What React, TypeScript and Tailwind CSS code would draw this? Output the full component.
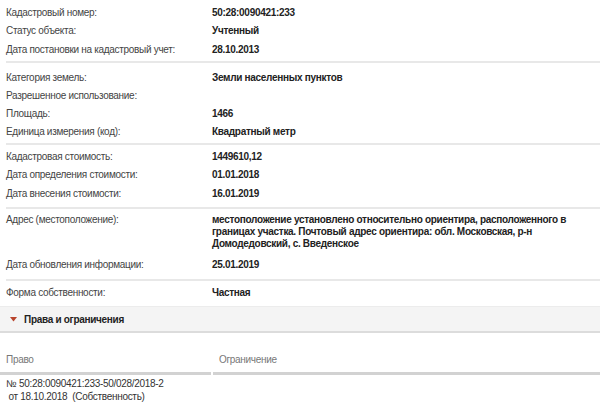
const rows1 = [
  ['Кадастровый номер:', '50:28:0090421:233'],
  ['Статус объекта:', 'Учтенный'],
  ['Дата постановки на кадастровый учет:', '28.10.2013'],
];

const rows2 = [
  ['Категория земель:', 'Земли населенных пунктов'],
  ['Разрешенное использование:', ''],
  ['Площадь:', '1466'],
  ['Единица измерения (код):', 'Квадратный метр'],
];

const rows3 = [
  ['Кадастровая стоимость:', '1449610,12'],
  ['Дата определения стоимости:', '01.01.2018'],
  ['Дата внесения стоимости:', '16.01.2019'],
];

const Row = ({ label, value, h }: { label: string; value: string; h: string }) => (
  <div className={`flex items-center ${h}`}>
    <div className="w-[206px] shrink-0 text-[#444]">{label}</div>
    <div className="font-bold text-[#222]">{value}</div>
  </div>
);

const Sep = () => <div className="h-[2px] bg-[#e8e8e8]" />;

export default function App() {
  return (
    <div
      className="w-[600px] h-[404px] overflow-hidden bg-white pl-[6px] text-[10px] tracking-[-0.3px]"
      style={{ fontFamily: '"Liberation Sans", Arial, sans-serif' }}
    >
      <div className="pt-[3px] pb-[2.5px]">
        {rows1.map(([l, v]) => (
          <Row key={l} label={l} value={v} h="h-[18.5px]" />
        ))}
      </div>
      <Sep />
      <div className="pt-[5px] pb-[3px]">
        {rows2.map(([l, v]) => (
          <Row key={l} label={l} value={v} h="h-[18px]" />
        ))}
      </div>
      <Sep />
      <div className="pt-[2px] pb-[4.5px]">
        {rows3.map(([l, v]) => (
          <Row key={l} label={l} value={v} h="h-[18.5px]" />
        ))}
      </div>
      <Sep />
      <div className="pt-[5px] pb-[6px]">
        <div className="flex leading-[12px]">
          <div className="w-[206px] shrink-0 text-[#444]">Адрес (местоположение):</div>
          <div className="w-[368px] font-bold text-[#222]">
            местоположение установлено относительно ориентира, расположенного в границах участка. Почтовый адрес ориентира: обл. Московская, р-н Домодедовский, с. Введенское
          </div>
        </div>
        <div className="mt-[5px]">
          <Row label="Дата обновления информации:" value="25.01.2019" h="h-[18px]" />
        </div>
      </div>
      <Sep />
      <div className="pt-[2px] pb-[5px]">
        <Row label="Форма собственности:" value="Частная" h="h-[18px]" />
      </div>
      <div className="-ml-[6px] flex h-[27px] items-center border-t border-b-2 border-t-[#ececec] border-b-[#dcdcdc] bg-[#f4f4f4] pl-[10px]">
        <svg width="7" height="5" viewBox="0 0 7 5" className="mr-[7px]">
          <polygon points="0,0 7,0 3.5,4.5" fill="#b8442c" />
        </svg>
        <span className="font-bold text-[#222]">Права и ограничения</span>
      </div>
      <div className="-ml-[6px] mt-[20px] flex">
        <div className="w-[211px] shrink-0">
          <div className="h-[13px] pl-[6px] leading-[13px] text-[#777]">Право</div>
          <div className="mt-[6px] h-[3px] bg-[#d2d2d2]" />
        </div>
        <div className="w-[2px]" />
        <div className="flex-1">
          <div className="h-[13px] pl-[6px] leading-[13px] text-[#777]">Ограничение</div>
          <div className="mt-[6px] h-[3px] bg-[#d2d2d2]" />
        </div>
      </div>
      <div className="-ml-[6px] border-b border-[#e2e2e2] pt-[2px] pb-[1px] pl-[6px] leading-[13px] text-[#333]">
        <div>№ 50:28:0090421:233-50/028/2018-2</div>
        <div className="whitespace-pre"> от 18.10.2018  (Собственность)</div>
      </div>
    </div>
  );
}
